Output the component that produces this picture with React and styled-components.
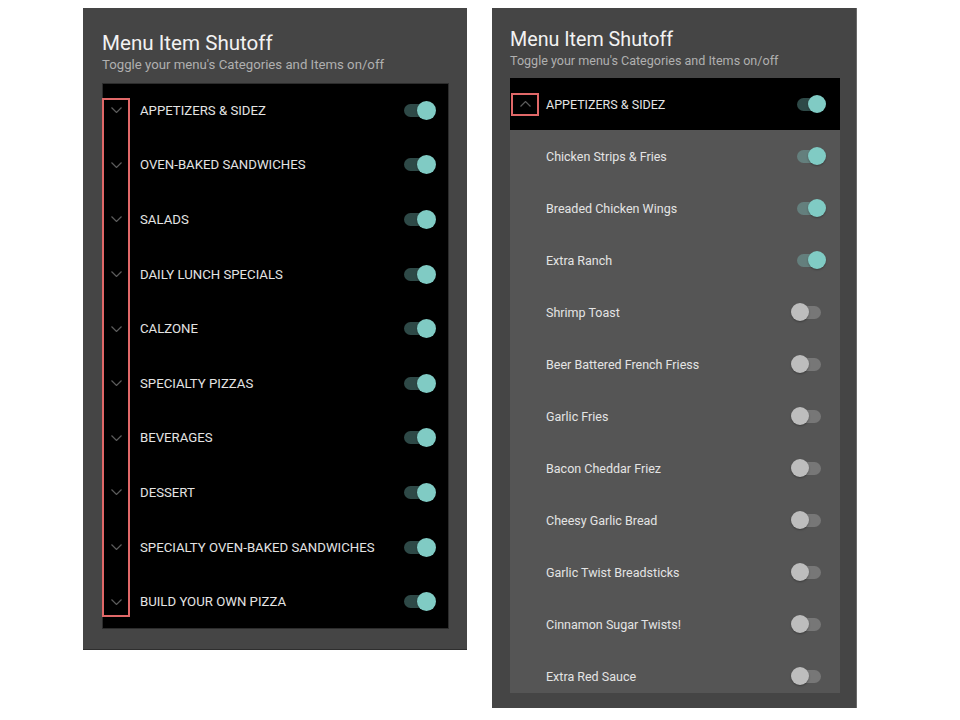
import React from "react";
import styled, { createGlobalStyle } from "styled-components";

const categories = [
  "APPETIZERS & SIDEZ",
  "OVEN-BAKED SANDWICHES",
  "SALADS",
  "DAILY LUNCH SPECIALS",
  "CALZONE",
  "SPECIALTY PIZZAS",
  "BEVERAGES",
  "DESSERT",
  "SPECIALTY OVEN-BAKED SANDWICHES",
  "BUILD YOUR OWN PIZZA",
];

const appetizers = [
  { name: "Chicken Strips & Fries", on: true },
  { name: "Breaded Chicken Wings", on: true },
  { name: "Extra Ranch", on: true },
  { name: "Shrimp Toast", on: false },
  { name: "Beer Battered French Friess", on: false },
  { name: "Garlic Fries", on: false },
  { name: "Bacon Cheddar Friez", on: false },
  { name: "Cheesy Garlic Bread", on: false },
  { name: "Garlic Twist Breadsticks", on: false },
  { name: "Cinnamon Sugar Twists!", on: false },
  { name: "Extra Red Sauce", on: false },
];

const GlobalStyle = createGlobalStyle`
  body {
    margin: 0;
    background: #ffffff;
    font-family: Roboto, "Noto Sans", sans-serif;
  }
`;

const Stage = styled.div`
  display: flex;
  align-items: flex-start;
  gap: 25px;
  padding: 8px 0 0 83px;
`;

const Panel = styled.section`
  box-sizing: border-box;
  width: ${(p) => p.$width}px;
  padding: ${(p) => p.$pad};
  background: #454545;
  border-bottom: ${(p) => (p.$edge === "bottom" ? "1px solid #2e2e2e" : "none")};
  border-right: ${(p) => (p.$edge === "right" ? "1px solid #6a6a6a" : "none")};
`;

const Title = styled.h1`
  margin: 0;
  font-size: ${(p) => p.$size}px;
  line-height: ${(p) => p.$lh}px;
  font-weight: 400;
  color: #f2f2f2;
`;

const Subtitle = styled.p`
  margin: 2px 0 10px;
  font-size: ${(p) => p.$size}px;
  line-height: ${(p) => p.$lh}px;
  color: #b0b0b0;
  white-space: nowrap;
`;

const List = styled.div`
  position: relative;
  display: flex;
  flex-direction: column;
  background: ${(p) => p.$bg};
  max-height: ${(p) => (p.$max ? `${p.$max}px` : "none")};
  overflow: hidden;
  outline: ${(p) => (p.$framed ? "1px solid #2c2c2c" : "none")};
  outline-offset: -1px;
`;

const Row = styled.div`
  flex: none;
  display: flex;
  align-items: center;
  height: ${(p) => p.$h}px;
  padding: 0 ${(p) => p.$right}px 0 ${(p) => p.$left}px;
  gap: ${(p) => p.$gap}px;
  background: ${(p) => p.$bg || "transparent"};
`;

const ChevronCell = styled.div`
  box-sizing: border-box;
  flex: none;
  width: 28px;
  height: ${(p) => (p.$outlined ? "23px" : "auto")};
  display: flex;
  align-items: center;
  justify-content: center;
  border: ${(p) => (p.$outlined ? "2px solid #e06868" : "none")};
`;

const Label = styled.span`
  flex: 1;
  font-size: ${(p) => p.$size}px;
  color: #e4e4e4;
  white-space: nowrap;
`;

const Highlight = styled.div`
  position: absolute;
  left: 0;
  top: 15px;
  width: 28px;
  height: 519px;
  box-sizing: border-box;
  border: 2px solid #e06868;
  pointer-events: none;
`;

const SwitchWrap = styled.div`
  flex: none;
  position: relative;
  display: flex;
  align-items: center;
  height: 20px;
  padding: 0 5px 0 6px;
`;

const Track = styled.div`
  width: ${(p) => p.$w}px;
  height: 13px;
  border-radius: 7px;
  background: ${(p) => (p.$on ? "rgba(128, 203, 196, 0.36)" : "rgba(255, 255, 255, 0.2)")};
`;

const Thumb = styled.div`
  position: absolute;
  top: 50%;
  left: ${(p) => (p.$on ? 6 + p.$w - p.$d + 5 : 0)}px;
  width: ${(p) => p.$d}px;
  height: ${(p) => p.$d}px;
  margin-top: ${(p) => -p.$d / 2}px;
  border-radius: 50%;
  background: ${(p) => (p.$on ? "#80cbc4" : "#bdbdbd")};
  box-shadow: 0 1px 2px rgba(0, 0, 0, 0.3);
`;

function Chevron({ up }) {
  return (
    <svg width="11" height="6" viewBox="0 0 11 6">
      <polyline
        points={up ? "0.5,5.5 5.5,0.5 10.5,5.5" : "0.5,0.5 5.5,5.5 10.5,0.5"}
        fill="none"
        stroke="#5c5c5c"
        strokeWidth="1.2"
      />
    </svg>
  );
}

function Switch({ on, w, d }) {
  return (
    <SwitchWrap>
      <Track $on={on} $w={w} />
      <Thumb $on={on} $w={w} $d={d} />
    </SwitchWrap>
  );
}

function CollapsedView() {
  return (
    <Panel $width={384} $pad="23px 18px 20px 19px" $edge="bottom">
      <Title $size={20.6} $lh={24}>Menu Item Shutoff</Title>
      <Subtitle $size={13.2} $lh={16}>Toggle your menu's Categories and Items on/off</Subtitle>
      <List $bg="#000" $framed>
        {categories.map((name) => (
          <Row key={name} $h={54.6} $left={0} $right={13} $gap={10}>
            <ChevronCell>
              <Chevron />
            </ChevronCell>
            <Label $size={13.2}>{name}</Label>
            <Switch on w={27} d={19} />
          </Row>
        ))}
        <Highlight />
      </List>
    </Panel>
  );
}

function ExpandedView() {
  return (
    <Panel $width={365} $pad="20px 16px 15px 18px" $edge="right">
      <Title $size={19.7} $lh={23}>Menu Item Shutoff</Title>
      <Subtitle $size={12.55} $lh={15}>Toggle your menu's Categories and Items on/off</Subtitle>
      <List $bg="#555" $max={615}>
        <Row $h={52} $left={1} $right={14} $gap={7} $bg="#000">
          <ChevronCell $outlined>
            <Chevron up />
          </ChevronCell>
          <Label $size={12.5}>APPETIZERS &amp; SIDEZ</Label>
          <Switch on w={24} d={18} />
        </Row>
        {appetizers.map((item) => (
          <Row key={item.name} $h={52} $left={36} $right={14} $gap={7}>
            <Label $size={12.5}>{item.name}</Label>
            <Switch on={item.on} w={24} d={18} />
          </Row>
        ))}
      </List>
    </Panel>
  );
}

export default function App() {
  return (
    <>
      <GlobalStyle />
      <Stage>
        <CollapsedView />
        <ExpandedView />
      </Stage>
    </>
  );
}
